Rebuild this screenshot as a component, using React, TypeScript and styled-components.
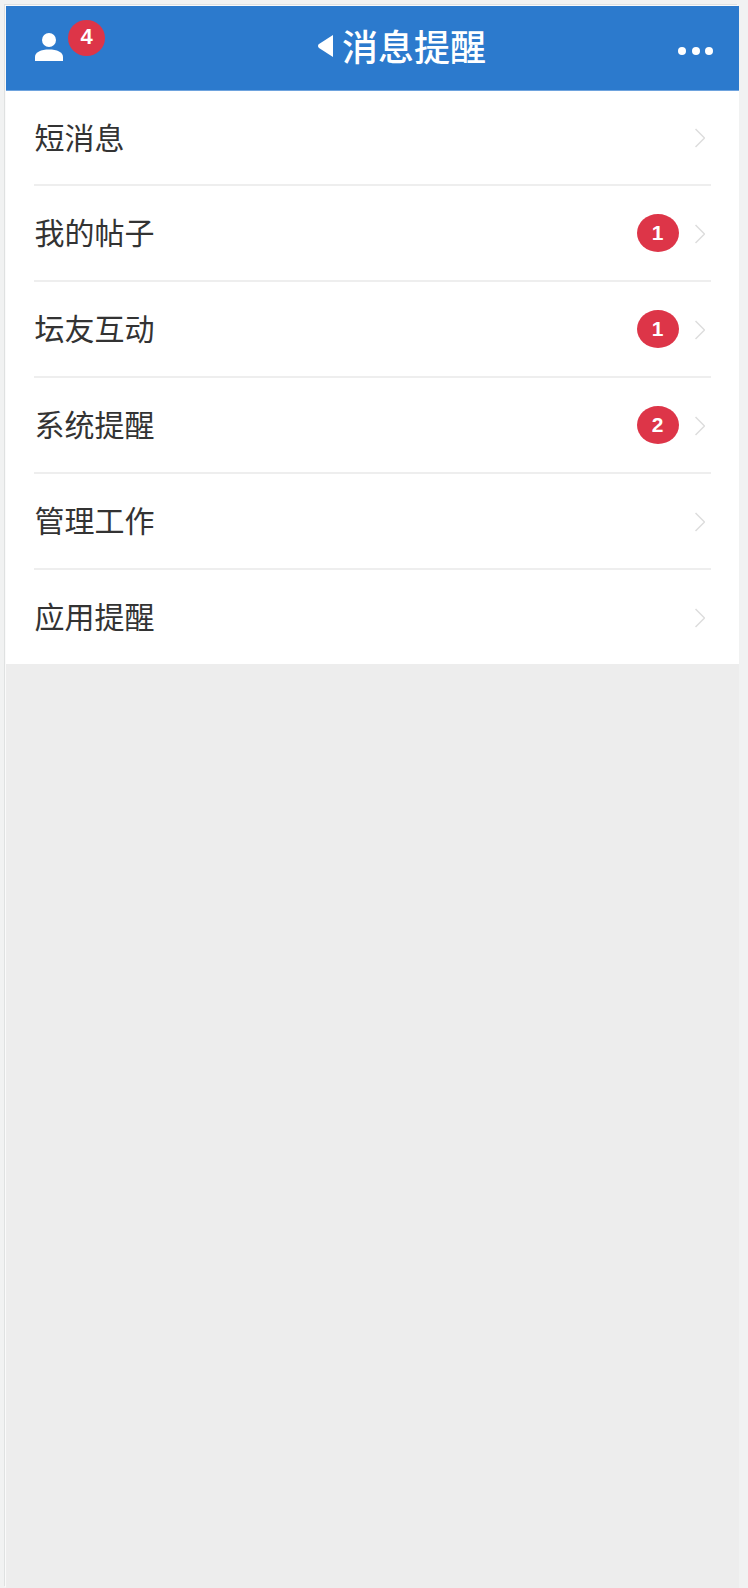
import React from "react";
import styled, { createGlobalStyle } from "styled-components";

const Global = createGlobalStyle`
  html, body { margin: 0; padding: 0; background: #f1f2f2; }
  body { font-family: "Liberation Sans", "Noto Sans CJK SC", sans-serif; }
`;

const Frame = styled.div`
  box-sizing: border-box;
  width: 748px;
  height: 1588px;
  padding: 6px 9px 0 6px;
  overflow: hidden;
`;

const Screen = styled.div`
  height: 1582px;
  background: #ededed;
  box-shadow: -1px -1px 0 #fafafa, -2px -2px 0 #dfe1e1;
`;

const Header = styled.header`
  box-sizing: border-box;
  height: 85px;
  background: #2c7acd;
  border-bottom: 1px solid #6ea3de;
  display: grid;
  grid-template-columns: 1fr auto 1fr;
  align-items: center;
  padding: 0 26px 0 29px;
  color: #fff;
`;

const UserArea = styled.div`
  position: relative;
  display: flex;
  align-items: center;
`;

const UserIcon = styled.svg`
  width: 28px;
  height: 29px;
  fill: #fff;
  display: block;
  margin-top: -4px;
`;

const HeaderBadge = styled.span`
  position: absolute;
  left: 33px;
  top: -16px;
  width: 37px;
  height: 36px;
  border-radius: 50%;
  background: #dd3548;
  font-size: 22px;
  font-weight: 700;
  line-height: 34px;
  text-align: center;
`;

const Title = styled.h1`
  margin: 2px 0 0 56px;
  display: flex;
  align-items: center;
  gap: 9px;
  font-size: 36px;
  font-weight: 500;
  line-height: 48px;
`;

const Back = styled.svg`
  width: 15px;
  height: 22px;
  fill: #fff;
  display: block;
  margin-top: -6px;
`;

const More = styled.div`
  justify-self: end;
  display: flex;
  gap: 5.3px;
  margin-top: 5px;
`;

const Dot = styled.i`
  display: block;
  width: 8px;
  height: 8px;
  border-radius: 50%;
  background: #fff;
`;

const List = styled.ul`
  list-style: none;
  margin: 0;
  padding: 0;
  background: #fff;
`;

const Row = styled.li`
  box-sizing: border-box;
  height: 96px;
  margin: 0 28px;
  display: flex;
  align-items: center;
  border-bottom: 2px solid #eeeeee;
  &:first-child { height: 95px; }
  &:last-child { height: 94px; border-bottom: 0; }
`;

const Label = styled.span`
  flex: 1;
  font-size: 30px;
  color: #333;
  margin: -4px 0 0 0.5px;
`;

const Count = styled.span`
  width: 42px;
  height: 38px;
  border-radius: 50%;
  background: #dd3548;
  color: #fff;
  font-size: 21px;
  font-weight: 700;
  line-height: 37px;
  text-align: center;
  margin-right: 16px;
`;

const Chevron = styled.svg`
  width: 10px;
  height: 20px;
  fill: none;
  stroke: #dddddd;
  stroke-width: 1.5;
  margin: 1px 6.5px 0 0;
  display: block;
`;

const rows: { label: string; count?: number }[] = [
  { label: "短消息" },
  { label: "我的帖子", count: 1 },
  { label: "坛友互动", count: 1 },
  { label: "系统提醒", count: 2 },
  { label: "管理工作" },
  { label: "应用提醒" },
];

export default function App() {
  return (
    <Frame>
      <Global />
      <Screen>
        <Header>
          <UserArea>
            <UserIcon viewBox="0 0 28 29">
              <circle cx="14" cy="8" r="7" />
              <path d="M0 29v-4c0-5 6-7.500 14-7.500S28 20 28 25v4z" />
            </UserIcon>
            <HeaderBadge>4</HeaderBadge>
          </UserArea>
          <Title>
            <Back viewBox="0 0 15 22">
              <path d="M15 0v22L1 13a2.500 2.500 0 0 1 0-4z" />
            </Back>
            消息提醒
          </Title>
          <More>
            <Dot />
            <Dot />
            <Dot />
          </More>
        </Header>
        <List>
          {rows.map((r) => (
            <Row key={r.label}>
              <Label>{r.label}</Label>
              {r.count ? <Count>{r.count}</Count> : null}
              <Chevron viewBox="0 0 10 20">
                <path d="M.5 1l9 9-9 9" />
              </Chevron>
            </Row>
          ))}
        </List>
      </Screen>
    </Frame>
  );
}
